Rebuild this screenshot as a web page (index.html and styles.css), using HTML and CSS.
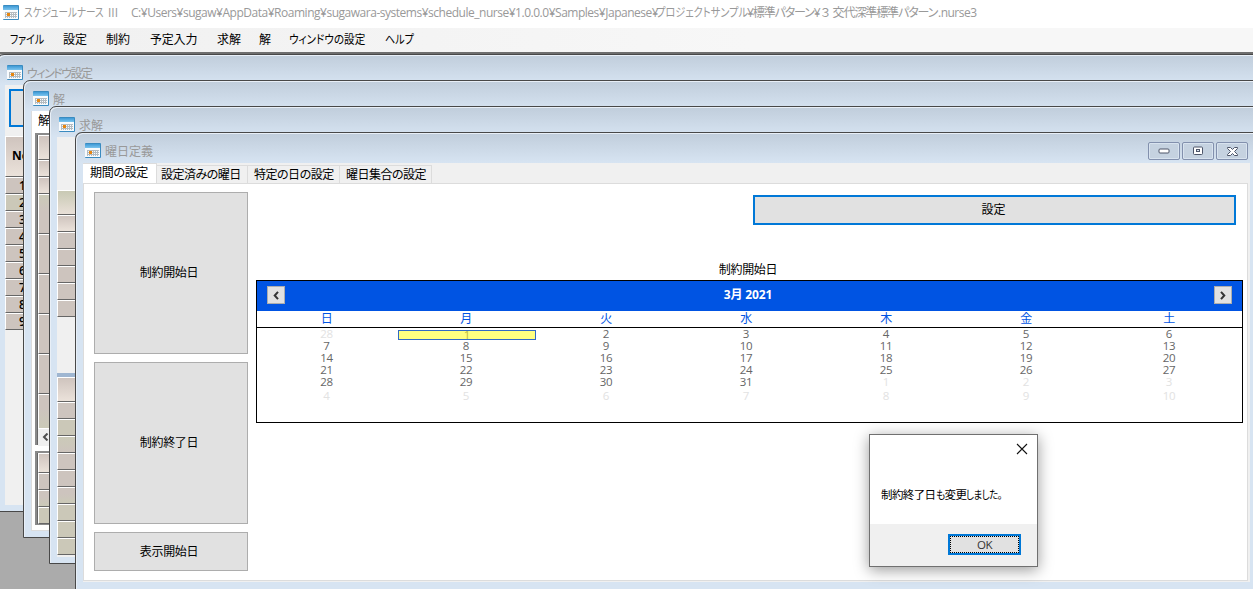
FILE: index.html
```html
<!DOCTYPE html>
<html lang="ja">
<head>
<meta charset="utf-8">
<title>スケジュールナース III</title>
<link rel="stylesheet" href="styles.css">
</head>
<body>
<svg class="defs" width="0" height="0">
  <defs>
    <linearGradient id="bar" x1="0" y1="0" x2="0" y2="1"><stop offset="0" stop-color="#3f9ad6"/><stop offset="1" stop-color="#7cc4ee"/></linearGradient>
    <symbol id="cal" viewBox="0 0 16 15">
      <rect x="0" y="0" width="16" height="15" rx="1" fill="#3a8bc0"/>
      <rect x="0" y="1" width="15" height="4" fill="url(#bar)"/>
      <rect x="0" y="5" width="15" height="9" fill="#f8fbfd"/>
      <path d="M2 7.500h12M2 9.500h12M2 11.500h12M2.500 7v6M4.500 7v6M6.500 7v6M8.500 7v6M10.500 7v6M12.500 7v6" stroke="#b4bbc0"/>
      <rect x="4" y="8" width="3" height="3" fill="#e8860f"/>
    </symbol>
  </defs>
</svg>
<div class="app">
  <header class="titlebar">
    <svg class="icon"><use href="#cal"/></svg>
    <span class="t-name"><em>スケジュールナース</em></span><span class="t-iii">III</span><span class="t-path">C:¥Users¥sugaw¥AppData¥Roaming¥sugawara-systems¥schedule_nurse¥1.0.0.0¥Samples¥Japanese¥</span><span class="t-proj"><em>プロジェクトサンプル</em></span><span class="t-pat">¥標準パターン¥<b>３</b>交代深準標準パターン</span><span class="t-ext">.nurse3</span>
  </header>
  <nav class="menu">
    <span class="m1"><em>ファイル</em></span><span class="m2">設定</span><span class="m3">制約</span><span class="m4">予定入力</span><span class="m5">求解</span><span class="m6">解</span><span class="m7"><em>ウィンドウの設定</em></span><span class="m8"><em>ヘルプ</em></span>
  </nav>
  <main class="workspace">
    <section class="win w1">
      <div class="cap"><svg class="icon"><use href="#cal"/></svg><span class="cap-kana">ウィンドウ設定</span></div>
      <div class="client">
        <div class="blue-button"></div>
        <div class="cell head h41">No</div>
        <div class="cell num">1</div><div class="cell num alt">2</div><div class="cell num">3</div><div class="cell num">4</div><div class="cell num">5</div><div class="cell num">6</div><div class="cell num">7</div><div class="cell num">8</div><div class="cell num">9</div>
      </div>
    </section>
    <section class="win w2">
      <div class="cap"><svg class="icon"><use href="#cal"/></svg><span>解</span></div>
      <div class="client page">
        <div class="tab-label">解</div>
        <div class="grid">
          <div class="cell head h25"></div><div class="cell head h17"></div><div class="cell head h17"></div>
          <div class="cell h40 greentop"></div><div class="cell h40"></div><div class="cell h40"></div><div class="cell h40"></div><div class="cell h40"></div><div class="cell last greenbot"></div>
          <div class="scroll"><svg width="7" height="8" viewBox="0 0 7 8"><path d="M5.5 .5 2 4l3.500 3.500" fill="none" stroke="#505050" stroke-width="2"/></svg></div>
        </div>
        <div class="grid second">
          <div class="cell head h20"></div><div class="cell h17"></div><div class="cell h17 greenbot"></div><div class="cell h17 alt"></div>
        </div>
      </div>
    </section>
    <section class="win w3">
      <div class="cap"><svg class="icon"><use href="#cal"/></svg><span>求解</span></div>
      <div class="client">
        <div class="cell h25 greenhead"></div><div class="cell head h17"></div><div class="cell h17"></div><div class="cell h17"></div><div class="cell h17"></div><div class="cell h17"></div><div class="cell h17"></div>
        <div class="splitter"></div>
        <div class="cell head h25"></div><div class="cell h17"></div><div class="cell h17 alt"></div><div class="cell h17 greentop"></div><div class="cell h17"></div><div class="cell h17"></div><div class="cell h17 greenbot"></div><div class="cell h17 alt"></div><div class="cell h17 alt"></div><div class="cell h17 alt"></div>
      </div>
    </section>
    <section class="win w4">
      <div class="cap"><svg class="icon"><use href="#cal"/></svg><span>曜日定義</span>
        <div class="controls">
          <i><svg width="12" height="6"><rect x="1" y="1" width="10" height="4" rx="1" fill="#fff" stroke="#4d5569"/></svg></i>
          <i><svg width="12" height="10"><rect x="1.500" y="1" width="9" height="7.500" rx="1" fill="#fff" stroke="#4d5569"/><rect x="4.500" y="3.500" width="3" height="2" fill="#dce5ef" stroke="#4d5569"/></svg></i>
          <i><svg width="13" height="11" viewBox="0 0 13 11"><path d="M1.500 1.500h3l2 2 2-2h3v1l-3 3 3 3v1h-3l-2-2-2 2h-3v-1l3-3-3-3z" fill="#fff" stroke="#4d5569"/></svg></i>
        </div>
      </div>
      <div class="client">
        <div class="tabs"><div class="tab on">期間の設定</div><div class="tab t2">設定済みの曜日</div><div class="tab t3">特定の日の設定</div><div class="tab t4">曜日集合の設定</div></div>
        <div class="tabpage">
          <div class="side"><div class="btn">制約開始日</div><div class="btn">制約終了日</div><div class="btn small">表示開始日</div></div>
          <div class="content">
            <div class="set">設定</div>
            <div class="cal-title">制約開始日</div>
            <div class="calendar">
              <div class="month">
                <b class="arrow"><svg width="7" height="9" viewBox="0 0 7 9"><path d="M5 .8 1.700 4.500 5 8.200" fill="none" stroke="#333" stroke-width="2"/></svg></b>
                <span>3月 2021</span>
                <b class="arrow"><svg width="7" height="9" viewBox="0 0 7 9"><path d="M2 .8 5.300 4.500 2 8.200" fill="none" stroke="#333" stroke-width="2"/></svg></b>
              </div>
              <div class="week names"><span>日</span><span>月</span><span>火</span><span>水</span><span>木</span><span>金</span><span>土</span></div>
              <div class="days">
                <div class="week"><span class="dim">28</span><span class="sel">1</span><span>2</span><span>3</span><span>4</span><span>5</span><span>6</span></div>
                <div class="week"><span>7</span><span>8</span><span>9</span><span>10</span><span>11</span><span>12</span><span>13</span></div>
                <div class="week"><span>14</span><span>15</span><span>16</span><span>17</span><span>18</span><span>19</span><span>20</span></div>
                <div class="week"><span>21</span><span>22</span><span>23</span><span>24</span><span>25</span><span>26</span><span>27</span></div>
                <div class="week"><span>28</span><span>29</span><span>30</span><span>31</span><span class="dim">1</span><span class="dim">2</span><span class="dim">3</span></div>
                <div class="week tail"><span class="dim">4</span><span class="dim">5</span><span class="dim">6</span><span class="dim">7</span><span class="dim">8</span><span class="dim">9</span><span class="dim">10</span></div>
              </div>
            </div>
          </div>
        </div>
      </div>
    </section>
    <div class="dialog">
      <div class="dialog-body">
        <svg class="close" width="12" height="12"><path d="M1 1l10 10M11 1 1 11" stroke="#111" stroke-width="1.100"/></svg>
        <p><span>制約終了日</span><span class="mo">も</span><span>変更</span><span class="kana">しました。</span></p>
      </div>
      <div class="dialog-foot"><div class="ok"><span>OK</span></div></div>
    </div>
  </main>
</div>
</body>
</html>
```

FILE: styles.css
```css
* { box-sizing: border-box; }
body { margin: 0; font: 12px/16px "Open Sans", "Noto Sans CJK JP", sans-serif; color: #000; }
.defs { position: absolute; }
.app { width: 1253px; height: 589px; overflow: hidden; display: flex; flex-direction: column; white-space: nowrap; }
.icon { width: 16px; height: 15px; flex: none; display: block; }
em { display: inline-block; font-style: normal; transform-origin: 0 50%; }

.titlebar { height: 28px; flex: none; display: flex; padding: 5px 0 0 3px; color: #999; background: #fff; font-feature-settings: "palt"; }
.titlebar span { flex: none; height: 16px; }
.t-name { width: 83px; margin-left: 5px; }
.t-name em { transform: scaleX(.8); }
.t-iii { width: 24px; padding-left: 1px; }
.t-path { width: 525px; letter-spacing: -0.48px; }
.t-proj { width: 91px; }
.t-proj em { transform: scaleX(.85); }
.t-pat { width: 191px; letter-spacing: -1.1px; }
.t-pat b { font-weight: 400; font-feature-settings: normal; letter-spacing: 1px; }
.t-ext { letter-spacing: -0.5px; }

.menu { height: 24px; flex: none; display: flex; padding: 4px 0 0 10px; background: linear-gradient(90deg, #f0f0f0, #f7f7f7 60%); font-feature-settings: "palt"; }
.menu span { flex: none; }
.m1 { width: 53px; }
.m1 em { transform: scaleX(.82); }
.m2 { width: 43px; }
.m3 { width: 44px; }
.m4 { width: 67px; letter-spacing: -0.2px; }
.m5 { width: 42px; }
.m6 { width: 30px; }
.m7 { width: 96px; }
.m7 em { transform: scaleX(.88); }
.m8 em { transform: scaleX(.84); }

.workspace { position: relative; flex: 1; overflow: hidden; background: #ababab; border-top: 2px solid #6e6e6e; }
.win { position: absolute; width: 1300px; border: 1px solid #484848; border-radius: 7px 0 0 0; background: linear-gradient(#c0cddb, #d7e4f2 30px); box-shadow: inset 1px 1px #e8eff7; padding-left: 7px; overflow: hidden; }
.w1 { left: -3px; top: 0; height: 458px; }
.w2 { left: 23px; top: 26px; height: 458px; }
.w3 { left: 49px; top: 52px; height: 458px; }
.w4 { left: 75px; top: 78px; height: 458px; width: 1183px; border-bottom-color: #e8eff7; }
.cap { height: 30px; display: flex; padding: 10px 0 0 2px; color: #999; }
.cap span { margin-left: 4px; height: 16px; padding-top: 1px; }
.cap-kana { font-feature-settings: "palt"; letter-spacing: -1.5px; }
.client { background: #f0f0f0; height: 420px; }
.page { background: #fff; border-left: 1px solid #dcdcdc; border-bottom: 1px solid #dcdcdc; }

.cell { border-bottom: 1px solid #666; border-top: 1px solid #fff; border-left: 1px solid #fff; height: 17px; background: #cdc4be; }
.head { background: linear-gradient(#cfc4be, #ebe2da); }
.alt { background: #cbc8b8; }
.greenhead { background: linear-gradient(#c8c9b4, #e9e0d8); }
.greentop { background: linear-gradient(#cbcab8, #cdc4be 16px); }
.greenbot { background: linear-gradient(#cdc4be 40%, #cbcab8); }
.h17 { height: 17px; }
.h20 { height: 20px; }
.h25 { height: 25px; }
.h40 { height: 40px; }
.h41 { height: 41px; font-weight: 700; padding: 11px 0 0 6px; }
.w1 .client { padding-top: 4px; }
.blue-button { width: 80px; height: 38px; margin: 0 0 9px 4px; border: 2px solid #0078d7; background: #e1e1e1; }
.num { padding-left: 13px; line-height: 16px; font-weight: 600; }
.tab-label { height: 22px; padding: 3px 0 0 6px; line-height: 13px; }
.grid { margin-left: 3px; border-left: 2px solid #8a8a8a; border-top: 2px solid #8a8a8a; height: 312px; width: 100px; box-shadow: inset 1px 0 #666; padding-left: 1px; }
.last { height: 34px; border-bottom: 0; }
.scroll { height: 18px; border-top: 1px solid #fff; background: #f0f0f0; padding: 4px 0 0 4px; line-height: 0; }
.second { height: 74px; margin-top: 6px; border-bottom: 1px solid #8a8a8a; }
.w3 .client { padding-top: 53px; }
.splitter { height: 4px; margin-top: 56px; background: #9fb6d1; }

.controls { margin-left: auto; display: flex; gap: 2px; padding-right: 9px; transform: translateY(-1px); }
.controls i { width: 32px; height: 18px; border: 1px solid #8290ad; border-radius: 2px; box-shadow: inset 0 0 0 1px #d8e3ef; background: #c5d2e0; display: flex; align-items: center; justify-content: center; }
.w4 .client { width: 1167px; height: 419px; display: flex; flex-direction: column; }
.tabs { height: 20px; display: flex; align-items: flex-end; }
.tab { height: 18px; border: 1px solid #dcdcdc; border-left: 0; border-bottom: 0; padding: 0 4px; line-height: 18px; font-feature-settings: "palt"; letter-spacing: -0.5px; }
.on { width: 74px; height: 20px; background: #fff; padding-left: 7px; line-height: 17px; letter-spacing: -0.3px; }
.t2 { width: 91px; }
.t3 { width: 92px; padding-left: 6px; }
.t4 { width: 92px; padding-left: 6px; }
.tabpage { height: 398px; width: 1165px; background: #fff; border: 1px solid #dcdcdc; display: flex; padding: 8px 3px 0 10px; }
.side { width: 154px; display: flex; flex-direction: column; gap: 8px; }
.btn { height: 162px; background: #e1e1e1; border: 1px solid #adadad; display: flex; align-items: center; justify-content: center; padding-right: 4px; letter-spacing: -0.3px; }
.small { height: 39px; }
.content { width: 987px; margin-left: 8px; flex: none; padding-top: 3px; }
.set { margin-left: 497px; width: 483px; height: 30px; border: 2px solid #0078d7; background: #e1e1e1; display: flex; align-items: center; justify-content: center; padding-right: 2px; }
.cal-title { height: 55px; padding: 37px 3px 0 0; text-align: center; letter-spacing: -0.3px; }
.calendar { border: 1px solid #000; height: 143px; background: #fff; }
.month { height: 30px; background: #0054e3; color: #fff; display: flex; align-items: center; justify-content: space-between; padding: 0 10px 2px; font-weight: 700; }
.month span { padding-right: 3px; letter-spacing: -0.1px; }
.arrow { width: 18px; height: 18px; background: #e1e1e1; border: 1px solid #adadad; display: flex; align-items: center; justify-content: center; }
.week { display: grid; grid-template-columns: 139px repeat(5, 140px) 1fr; height: 12px; text-align: center; line-height: 12px; color: #666; font-size: 11.5px; letter-spacing: -0.3px; }
.names { height: 17px; border-bottom: 1px solid #000; color: #0054e3; line-height: 16px; font-size: 12px; }
.sel { background: #ffff80; border: 1px solid #316ac5; height: 10px; margin: 2px 0 0 2px; line-height: 7px; color: #b9b93e; }
.dim { color: #e2e2e2; }
.tail { height: 16px; line-height: 16px; }

.dialog { position: absolute; left: 869px; top: 380px; width: 169px; height: 133px; border: 1px solid #707070; background: #fff; box-shadow: 0 3px 14px rgba(0, 0, 0, .4); }
.dialog-body { height: 89px; padding: 8px 9px 0 11px; }
.close { display: block; margin-left: auto; }
.dialog-body p { display: flex; margin: 32px 0 0; font-feature-settings: "palt"; font-size: 11.5px; letter-spacing: -0.6px; }
.dialog-body .mo { width: 9px; transform: scaleX(.85); transform-origin: 0 50%; }
.dialog-body .kana { transform: scaleX(.82); transform-origin: 0 50%; }
.dialog-foot { height: 42px; background: #f0f0f0; padding: 10px 0 0 78px; }
.ok { width: 73px; height: 21px; border: 2px solid #0078d7; background: #e1e1e1; }
.ok span { display: block; height: 17px; border: 1px dotted #000; text-align: center; line-height: 16px; color: #333; font-size: 11.5px; letter-spacing: -0.5px; }
```
